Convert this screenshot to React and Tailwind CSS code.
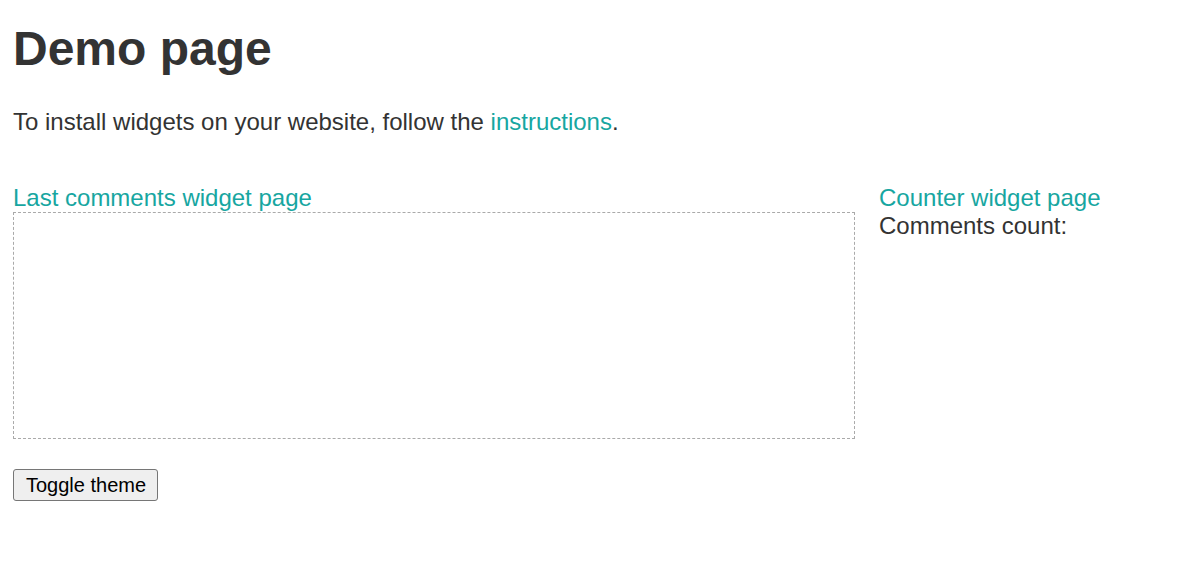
export default function App() {
  return (
    <div className="min-h-screen bg-white px-[13px] pt-[21px] text-[#333] font-['Liberation_Sans',Arial,sans-serif]">
      <h1 className="text-[48px] font-bold leading-[56px]">Demo page</h1>
      <p className="mt-[31px] text-[24px] leading-[28px]">
        To install widgets on your website, follow the{' '}
        <a href="#" className="text-[#17a6a1]">instructions</a>.
      </p>
      <div className="mt-[48px] flex gap-[24px] text-[24px] leading-[28px]">
        <div className="w-[842px]">
          <a href="#" className="block text-[#17a6a1]">Last comments widget page</a>
          <div className="h-[227px] border border-dashed border-[#aaa]"></div>
        </div>
        <div>
          <a href="#" className="block text-[#17a6a1]">Counter widget page</a>
          <div>Comments count:</div>
        </div>
      </div>
      <button className="mt-[30px] h-[32px] rounded-[3px] border border-[#767676] bg-[#efefef] pl-[12px] pr-[11px] text-[20px] leading-[24px] text-black">
        Toggle theme
      </button>
    </div>
  );
}
